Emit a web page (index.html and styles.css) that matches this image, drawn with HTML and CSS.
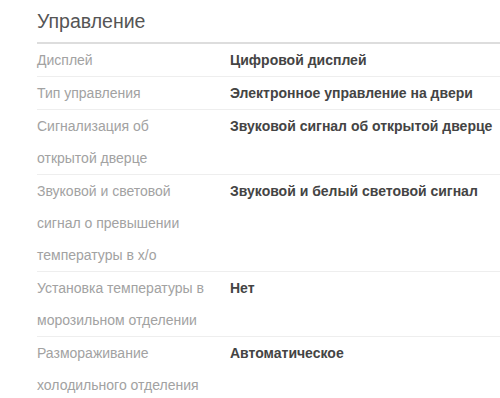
FILE: index.html
```html
<!DOCTYPE html>
<html lang="ru">
<head>
<meta charset="utf-8">
<link rel="stylesheet" href="styles.css">
</head>
<body>
<section class="specs">
  <h2 class="specs-title">Управление</h2>
  <div class="specs-table">
    <div class="row">
      <div class="label">Дисплей</div>
      <div class="value">Цифровой дисплей</div>
    </div>
    <div class="row">
      <div class="label">Тип управления</div>
      <div class="value">Электронное управление на двери</div>
    </div>
    <div class="row">
      <div class="label">Сигнализация об открытой дверце</div>
      <div class="value">Звуковой сигнал об открытой дверце</div>
    </div>
    <div class="row">
      <div class="label">Звуковой и световой сигнал о превышении температуры в х/о</div>
      <div class="value">Звуковой и белый световой сигнал</div>
    </div>
    <div class="row">
      <div class="label">Установка температуры в морозильном отделении</div>
      <div class="value">Нет</div>
    </div>
    <div class="row last">
      <div class="label">Размораживание холодильного отделения</div>
      <div class="value">Автоматическое</div>
    </div>
  </div>
</section>
</body>
</html>
```
FILE: styles.css
```css
html, body {
  margin: 0;
  padding: 0;
  background: #fff;
}
body {
  font-family: "Liberation Sans", Arial, sans-serif;
  overflow: hidden;
}
.specs {
  padding: 8px 0 0 37px;
}
.specs-title {
  margin: 0;
  font-size: 19.5px;
  font-weight: normal;
  color: #555;
  line-height: 27px;
  padding-bottom: 7px;
  border-bottom: 2px solid #ddd;
}
.row {
  display: grid;
  grid-template-columns: 193px 1fr;
  border-bottom: 1px solid #eee;
  font-size: 14px;
  line-height: 32px;
}
.row.last {
  border-bottom: none;
}
.label {
  color: #a2a2a2;
  padding-right: 20px;
}
.value {
  color: #444;
  font-weight: bold;
  white-space: nowrap;
}
```
